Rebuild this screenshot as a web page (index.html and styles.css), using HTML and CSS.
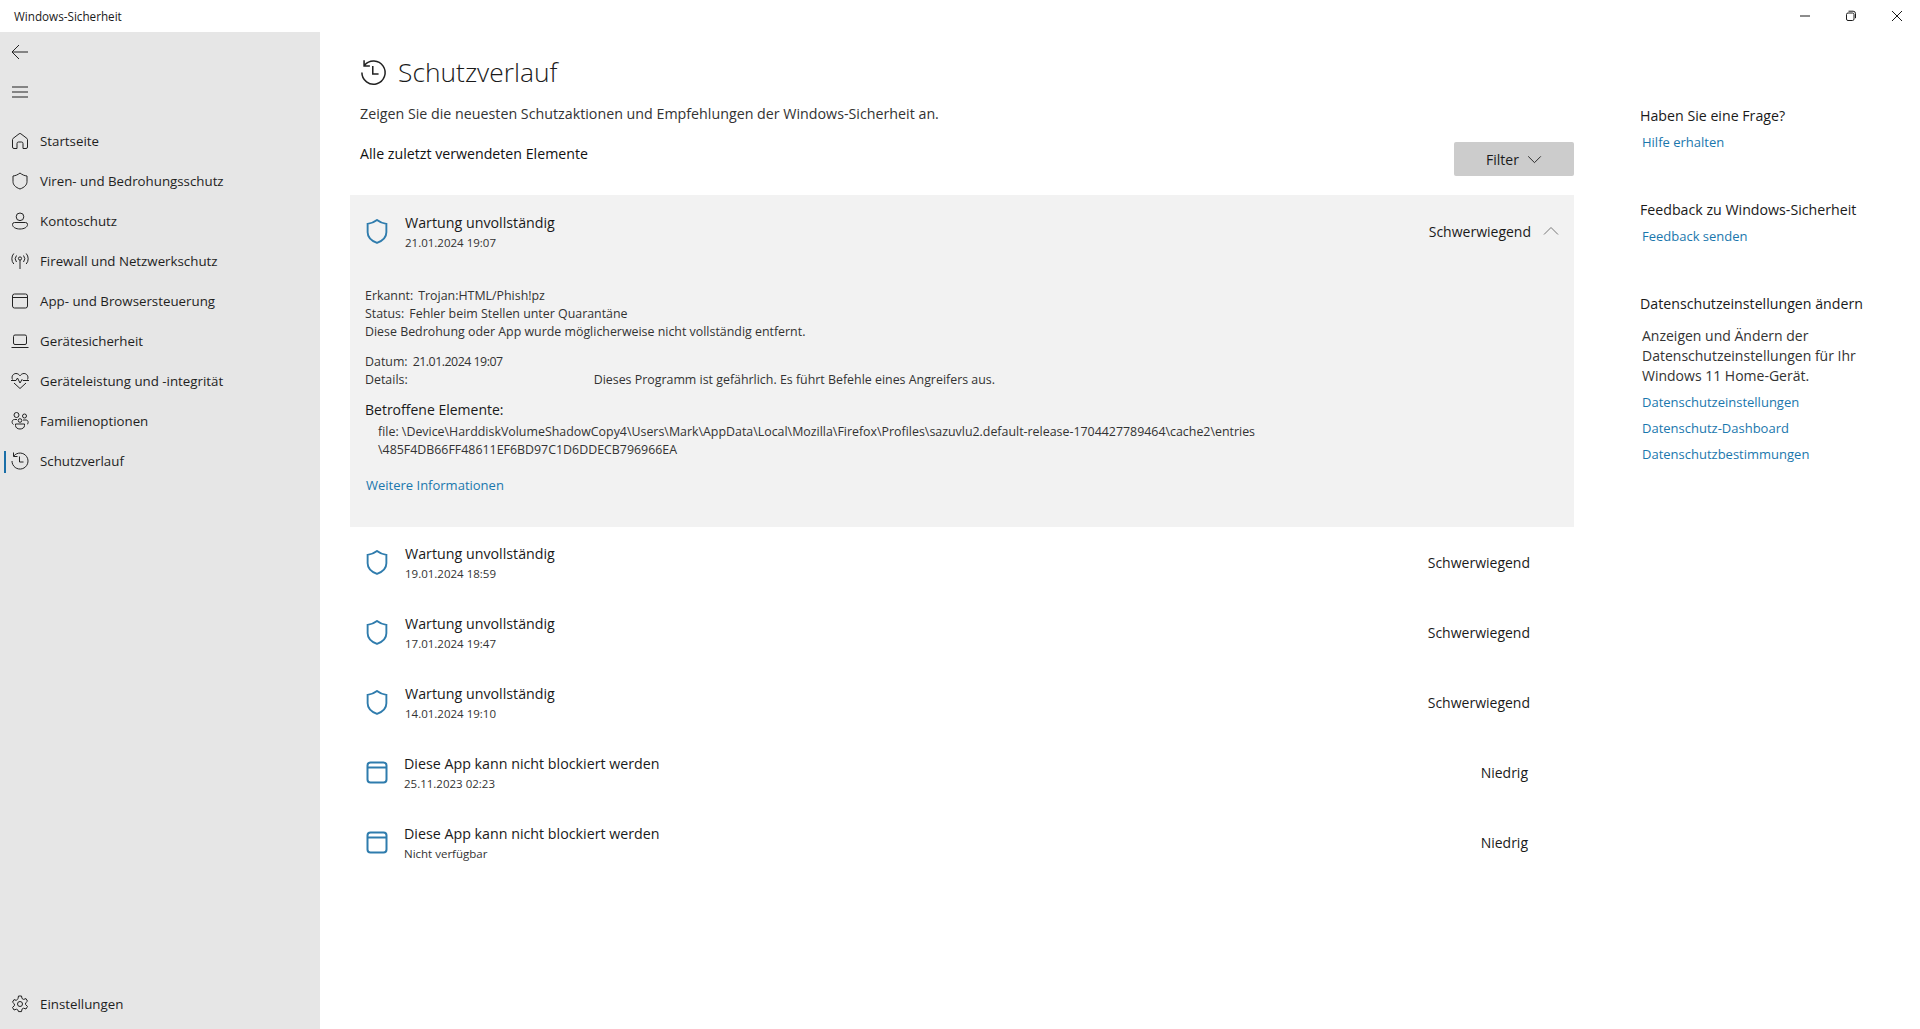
FILE: index.html
```html
<!DOCTYPE html>
<html lang="de">
<head>
<meta charset="utf-8">
<title>Windows-Sicherheit</title>
<link rel="stylesheet" href="styles.css">
</head>
<body>
<header class="titlebar">
  <span class="app-name">Windows-Sicherheit</span>
  <div class="win-controls">
    <svg class="win-btn" viewBox="0 0 12 12"><path d="M1 6h10"/></svg>
    <svg class="win-btn" viewBox="0 0 12 12"><rect x="1.5" y="3" width="7.5" height="7.5" rx="1.5"/><path d="M3.5 1.2h4.6a2.4 2.4 0 0 1 2.4 2.4v4.6"/></svg>
    <svg class="win-btn" viewBox="0 0 12 12"><path d="M1 1l10 10M11 1L1 11"/></svg>
  </div>
</header>
<div class="shell">
  <nav class="sidebar">
    <div class="nav-tool"><svg class="ico" viewBox="0 0 20 20"><path d="M18 10H2.500M9 3l-7 7 7 7"/></svg></div>
    <div class="nav-tool nav-tool-gap"><svg class="ico" viewBox="0 0 20 20"><path d="M2 5h16M2 10h16M2 15h16"/></svg></div>
    <a class="nav-item"><svg class="ico" viewBox="0 0 20 20"><path d="M2.500 16V8.600a1.500 1.500 0 0 1 .6-1.200l6-4.600a1.500 1.500 0 0 1 1.800 0l6 4.600a1.500 1.500 0 0 1 .6 1.200V16a1.500 1.500 0 0 1-1.500 1.500H13v-5a1.500 1.500 0 0 0-1.500-1.500h-3A1.500 1.500 0 0 0 7 12.500v5H4A1.500 1.500 0 0 1 2.500 16z"/></svg><span>Startseite</span></a>
    <a class="nav-item"><svg class="ico" viewBox="0 0 20 20"><path d="M10 2c2.200 1.800 4.500 2.700 7 3v5.500c0 3.300-2.300 5.800-7 7.500-4.700-1.700-7-4.200-7-7.500V5c2.500-.3 4.800-1.200 7-3z"/></svg><span>Viren- und Bedrohungsschutz</span></a>
    <a class="nav-item"><svg class="ico" viewBox="0 0 20 20"><circle cx="10" cy="5.800" r="3.800"/><path d="M4.500 11.500h11a2 2 0 0 1 2 2c0 2.800-3.400 4.500-7.500 4.500s-7.500-1.700-7.500-4.500a2 2 0 0 1 2-2z"/></svg><span>Kontoschutz</span></a>
    <a class="nav-item"><svg class="ico" viewBox="0 0 20 20"><circle cx="10" cy="7.500" r="1.600"/><path d="M10 9v9M6.500 4.500a5 5 0 0 0 0 6.500M13.500 4.500a5 5 0 0 1 0 6.500M3.800 2.500a8 8 0 0 0 0 10.500M16.200 2.500a8 8 0 0 1 0 10.500"/></svg><span>Firewall und Netzwerkschutz</span></a>
    <a class="nav-item"><svg class="ico" viewBox="0 0 20 20"><rect x="2.500" y="3" width="15" height="14" rx="2"/><path d="M2.500 6.500h15"/></svg><span>App- und Browsersteuerung</span></a>
    <a class="nav-item"><svg class="ico" viewBox="0 0 20 20"><rect x="3.500" y="4" width="13" height="9.500" rx="1.500"/><path d="M1.500 16.500h17"/></svg><span>Gerätesicherheit</span></a>
    <a class="nav-item"><svg class="ico" viewBox="0 0 20 20"><path d="M2.500 8.500C1 5 3.500 2.500 6 2.500c1.800 0 3 1 4 2.300 1-1.300 2.200-2.300 4-2.300 2.500 0 5 2.500 3.500 6M4 12l6 5.500 6-5.500M1 9.500h5l1.500-2.500 2.500 5 2-3.500 1 1h6"/></svg><span>Geräteleistung und -integrität</span></a>
    <a class="nav-item"><svg class="ico" viewBox="0 0 20 20"><circle cx="6.500" cy="4" r="2.500"/><circle cx="14.500" cy="5" r="2"/><circle cx="10" cy="9.500" r="1.800"/><path d="M3.500 13.500C1.500 12.500 1.500 8.500 4.500 8.500H7M13 9h3c2.500 0 2.800 3.300 1 4.500M5.500 13h9v1.500c0 2.200-2 3.500-4.500 3.500s-4.500-1.300-4.500-3.500z"/></svg><span>Familienoptionen</span></a>
    <a class="nav-item nav-active"><svg class="ico" viewBox="0 0 20 20"><path d="M3.800 5A8 8 0 1 1 2 10M3.500 1.500V5.500H7.500M9.500 5.500v5.500H13.500"/></svg><span>Schutzverlauf</span></a>
    <a class="nav-item nav-settings"><svg class="ico" viewBox="0 0 20 20"><circle cx="10" cy="10" r="2.500"/><path d="M8.500 2h3l.5 2.500 1.600.9 2.400-.8 1.500 2.600-1.900 1.700v1.800l1.900 1.700-1.500 2.600-2.400-.8-1.600.9-.5 2.500h-3L8 16.100l-1.600-.9-2.400.8-1.500-2.600 1.900-1.700V9.900L2.500 8.200 4 5.600l2.400.8L8 4.500z"/></svg><span>Einstellungen</span></a>
  </nav>
  <main class="content">
    <div class="page-head">
      <svg class="page-icon" viewBox="0 0 20 20"><path d="M3.800 5A8 8 0 1 1 2 10M3.500 1.500V5.500H7.500M9.500 5.500v5.500H13.500"/></svg>
      <h1>Schutzverlauf</h1>
    </div>
    <p class="intro">Zeigen Sie die neuesten Schutzaktionen und Empfehlungen der Windows-Sicherheit an.</p>
    <div class="filter-row">
      <span class="recent">Alle zuletzt verwendeten Elemente</span>
      <button class="filter-btn">Filter<svg class="chev" viewBox="0 0 16 10"><path d="M1 1.500l7 7 7-7"/></svg></button>
    </div>
    <section class="panel">
      <div class="row row-open">
        <svg class="status-ico" viewBox="1 0.500 20 24"><path d="M11 1.500c2.800 2.200 5.800 3.300 9 3.700v8c0 4.600-3 8-9 10.300-6-2.300-9-5.700-9-10.300v-8c3.200-.4 6.200-1.500 9-3.700z"/></svg>
        <div class="row-text"><div class="row-title">Wartung unvollständig</div><div class="row-date">21.01.2024 19:07</div></div>
        <span class="sev">Schwerwiegend</span>
        <svg class="chev-up" viewBox="0 0 16 10"><path d="M1 8.500l7-7 7 7"/></svg>
      </div>
      <div class="detail">
        <div class="d-line">Erkannt:<span class="gap-a">Trojan:HTML/Phish!pz</span></div>
        <div class="d-line">Status:<span class="gap-a">Fehler beim Stellen unter Quarantäne</span></div>
        <div class="d-line">Diese Bedrohung oder App wurde möglicherweise nicht vollständig entfernt.</div>
        <div class="d-line d-block">Datum:<span class="gap-a d-date">21.01.2024 19:07</span></div>
        <div class="d-line">Details:<span class="gap-c">Dieses Programm ist gefährlich. Es führt Befehle eines Angreifers aus.</span></div>
        <h2 class="d-head">Betroffene Elemente:</h2>
        <div class="d-file">file: \Device\HarddiskVolumeShadowCopy4\Users\Mark\AppData\Local\Mozilla\Firefox\Profiles\sazuvlu2.default-release-1704427789464\cache2\entries<br>\485F4DB66FF48611EF6BD97C1D6DDECB796966EA</div>
        <a class="d-link">Weitere Informationen</a>
      </div>
    </section>
    <div class="row">
      <svg class="status-ico" viewBox="1 0.500 20 24"><path d="M11 1.500c2.800 2.200 5.800 3.300 9 3.700v8c0 4.600-3 8-9 10.300-6-2.300-9-5.700-9-10.300v-8c3.200-.4 6.200-1.500 9-3.700z"/></svg>
      <div class="row-text"><div class="row-title">Wartung unvollständig</div><div class="row-date">19.01.2024 18:59</div></div>
      <span class="sev">Schwerwiegend</span>
    </div>
    <div class="row">
      <svg class="status-ico" viewBox="1 0.500 20 24"><path d="M11 1.500c2.800 2.200 5.800 3.300 9 3.700v8c0 4.600-3 8-9 10.300-6-2.300-9-5.700-9-10.300v-8c3.200-.4 6.200-1.500 9-3.700z"/></svg>
      <div class="row-text"><div class="row-title">Wartung unvollständig</div><div class="row-date">17.01.2024 19:47</div></div>
      <span class="sev">Schwerwiegend</span>
    </div>
    <div class="row">
      <svg class="status-ico" viewBox="1 0.500 20 24"><path d="M11 1.500c2.800 2.200 5.800 3.300 9 3.700v8c0 4.600-3 8-9 10.300-6-2.300-9-5.700-9-10.300v-8c3.200-.4 6.200-1.500 9-3.700z"/></svg>
      <div class="row-text"><div class="row-title">Wartung unvollständig</div><div class="row-date">14.01.2024 19:10</div></div>
      <span class="sev">Schwerwiegend</span>
    </div>
    <div class="row">
      <svg class="status-ico status-app" viewBox="0 0 22 25"><rect x="1.500" y="2.500" width="19" height="20" rx="3"/><path d="M1.500 7.500h19"/></svg>
      <div class="row-text"><div class="row-title">Diese App kann nicht blockiert werden</div><div class="row-date">25.11.2023 02:23</div></div>
      <span class="sev sev-low">Niedrig</span>
    </div>
    <div class="row">
      <svg class="status-ico status-app" viewBox="0 0 22 25"><rect x="1.500" y="2.500" width="19" height="20" rx="3"/><path d="M1.500 7.500h19"/></svg>
      <div class="row-text"><div class="row-title">Diese App kann nicht blockiert werden</div><div class="row-date">Nicht verfügbar</div></div>
      <span class="sev sev-low">Niedrig</span>
    </div>
  </main>
  <aside class="help">
    <section class="help-sec">
      <h3>Haben Sie eine Frage?</h3>
      <a class="help-link">Hilfe erhalten</a>
    </section>
    <section class="help-sec">
      <h3>Feedback zu Windows-Sicherheit</h3>
      <a class="help-link">Feedback senden</a>
    </section>
    <section class="help-sec">
      <h3>Datenschutzeinstellungen ändern</h3>
      <p class="help-text">Anzeigen und Ändern der Datenschutzeinstellungen für Ihr Windows 11 Home-Gerät.</p>
      <a class="help-link">Datenschutzeinstellungen</a>
      <a class="help-link">Datenschutz-Dashboard</a>
      <a class="help-link">Datenschutzbestimmungen</a>
    </section>
  </aside>
</div>
</body>
</html>
```
FILE: styles.css
```css
* { box-sizing: border-box; }
html, body { margin: 0; height: 100%; }
body {
  display: flex;
  flex-direction: column;
  height: 1029px;
  overflow: hidden;
  background: #fff;
  color: #1a1a1a;
  font-family: "Open Sans", "Noto Sans", sans-serif;
  font-size: 13.300px;
}
svg { fill: none; stroke: currentColor; flex: none; }
.titlebar {
  height: 32px;
  display: flex;
  align-items: center;
  justify-content: space-between;
  padding-left: 14px;
  font-size: 11.700px;
}
.win-controls { display: flex; gap: 34px; padding-right: 17px; margin-top: -1px; }
.win-btn { width: 12px; height: 12px; stroke-width: 1; }
.shell { flex: 1; display: flex; min-height: 0; }
.sidebar {
  width: 320px;
  background: #e6e6e6;
  display: flex;
  flex-direction: column;
}
.ico { width: 20px; height: 20px; stroke-width: 1; color: #222; }
.nav-tool { height: 40px; display: flex; align-items: center; padding-left: 10px; }
.nav-tool-gap { margin-bottom: 9px; }
.nav-item {
  height: 40px;
  display: flex;
  align-items: center;
  gap: 10px;
  padding-left: 10px;
  position: relative;
  color: #1f1f1f;
}
.nav-active::before {
  content: "";
  position: absolute;
  left: 4px;
  top: 10px;
  width: 2px;
  height: 22px;
  background: #1a6fa8;
}
.nav-settings { margin-top: auto; margin-bottom: 5px; }
.content { width: 1254px; padding: 0 0 0 30px; }
.page-head { display: flex; align-items: center; gap: 10px; height: 46px; margin: 17px 0 0 10px; }
.page-icon { width: 29px; height: 29px; stroke-width: 1.050; color: #222; margin-left: -1px; }
h1 { margin: 0; font-size: 26.400px; font-weight: 300; color: #1a1a1a; }
.intro { margin: 9px 0 0 10px; height: 20px; line-height: 20px; font-size: 14.250px; color: #333; }
.filter-row { display: flex; justify-content: space-between; margin: 18px 0 19px 10px; height: 34px; }
.recent { margin-top: 2px; line-height: 20px; font-size: 14.200px; color: #111; }
.filter-btn {
  width: 120px;
  height: 34px;
  border: 0;
  border-radius: 2px;
  background: #cccccc;
  font: inherit;
  font-size: 14px;
  color: #1a1a1a;
  display: flex;
  align-items: center;
  justify-content: center;
  gap: 8px;
}
.chev { width: 15px; height: 9px; stroke-width: 1; }
.chev-up { width: 16px; height: 10px; stroke-width: 1; color: #777; margin-left: 12px; }
.panel { background: #f2f2f2; height: 332px; }
.row { height: 70px; display: flex; align-items: center; padding: 0 44px 0 16px; }
.row-open { height: 72px; padding-right: 15px; }
.status-ico { width: 22px; height: 25px; stroke-width: 1.800; color: #2f7cad; margin-right: 17px; }
.status-app { stroke-width: 2; margin-right: 16px; }
.row-text { flex: 1; padding-top: 3px; }
.row-title { font-size: 14.250px; line-height: 20px; color: #1a1a1a; }
.row-date { font-size: 11.500px; line-height: 20px; color: #333; }
.sev { font-size: 14px; color: #1a1a1a; }
.sev-low { margin-right: 2px; }
.detail { padding: 20px 0 0 15px; font-size: 12.400px; line-height: 18px; color: #333; }
.d-line { height: 18px; }
.d-block { margin-top: 12px; }
.gap-a { margin-left: 5px; }
.d-date { letter-spacing: -.5px; }
.gap-c { margin-left: 186px; }
.d-head { margin: 10px 0 2px; font-size: 14px; font-weight: 400; line-height: 22px; color: #1a1a1a; }
.d-file { padding-left: 13px; }
.d-link { display: block; margin-top: 17px; padding-left: 1px; font-size: 13px; color: #1a77ad; }
.help { flex: 1; padding: 0 0 0 66px; }
.help-sec { margin-bottom: 45px; }
.help-sec:first-child { margin-top: 74px; }
h3 { margin: 0 0 3px; font-size: 14.200px; line-height: 20px; font-weight: 400; color: #1a1a1a; }
.help-link { display: block; margin-left: 2px; line-height: 26px; font-size: 13px; color: #1a77ad; }
.help-text { margin: 12px 0 3px 2px; font-size: 14px; line-height: 20px; color: #333; width: 240px; }
```
